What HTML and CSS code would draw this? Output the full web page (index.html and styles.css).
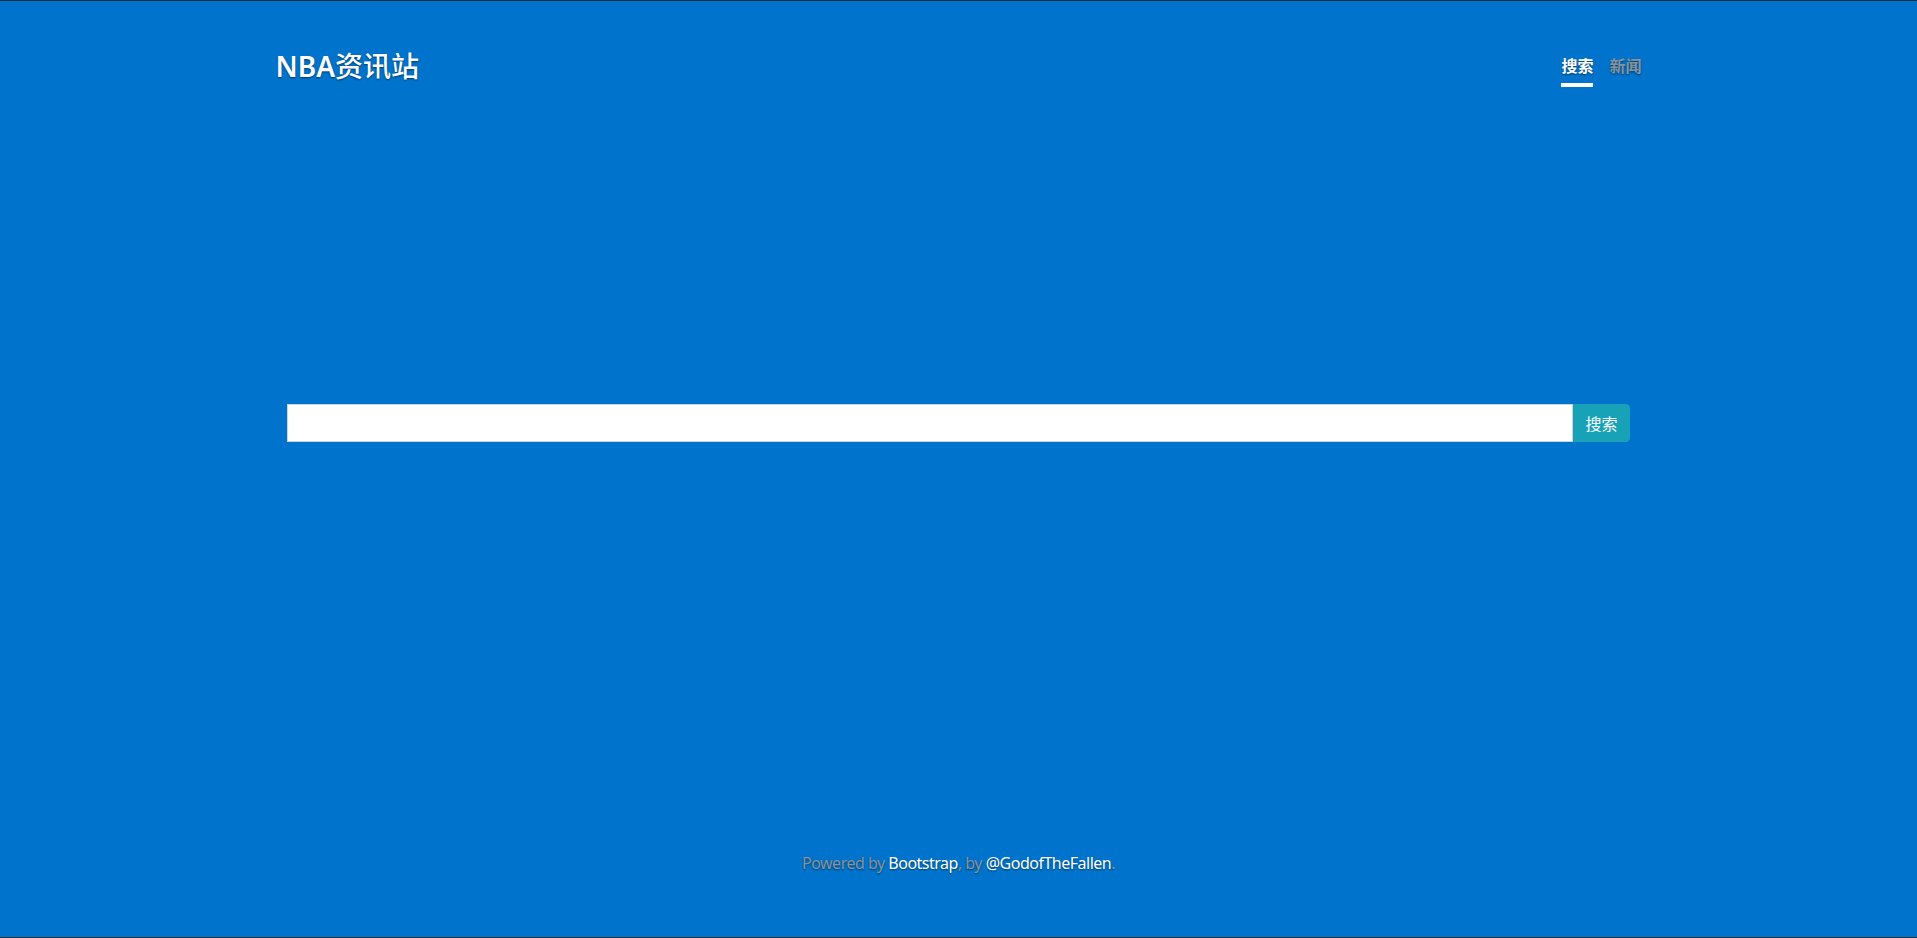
FILE: index.html
```html
<!DOCTYPE html>
<html lang="zh-CN">
<head>
<meta charset="utf-8">
<title>NBA资讯站</title>
<link rel="stylesheet" href="styles.css">
</head>
<body>
<div class="cover">
  <header class="masthead">
    <h3 class="brand">NBA<span class="brand-cjk">资讯站</span></h3>
    <nav class="nav">
      <a class="nav-link active" href="#">搜索</a>
      <a class="nav-link" href="#">新闻</a>
    </nav>
  </header>
  <main class="main">
    <form class="search">
      <input class="search-input" type="text">
      <button class="search-btn" type="button">搜索</button>
    </form>
  </main>
  <footer class="footer">
    <p>Powered by <a href="#">Bootstrap</a>, by <a href="#">@GodofTheFallen</a>.</p>
  </footer>
</div>
</body>
</html>
```
FILE: styles.css
```css
* { box-sizing: border-box; }
html, body { height: 100%; }
body {
  margin: 0;
  background: #0074cc;
  color: #fff;
  font-family: "Noto Sans", "Noto Sans CJK SC", sans-serif;
  font-size: 16px;
  line-height: 1.5;
  text-shadow: 0 1px 2px rgba(0,0,0,.5);
  border-top: 1px solid #1d2a36;
  border-bottom: 1px solid #1d2a36;
}
.cover {
  height: 100%;
  display: flex;
  flex-direction: column;
  width: 1366px;
  margin: 0 auto;
}
.masthead {
  display: flex;
  justify-content: space-between;
  align-items: flex-start;
  padding-top: 49px;
}
.brand {
  margin: 0;
  font-size: 28px;
  font-weight: 600;
  line-height: 1.2;
}
.brand-cjk { font-weight: 500; }
.nav { display: flex; gap: 16px; margin-top: -1px; }
.nav-link {
  font-family: "Noto Sans CJK SC", sans-serif;
  font-weight: 700;
  font-size: 16px;
  color: #8594a1;
  text-decoration: none;
  padding: 4px 0 6px;
  line-height: 24px;
  border-bottom: 4px solid transparent;
}
.nav-link.active { color: #fff; border-bottom-color: #fff; }
.main {
  flex: 1;
  display: flex;
  flex-direction: column;
  align-items: center;
  padding-top: 317px;
}
.search {
  display: flex;
  width: 1343px;
  height: 38px;
  margin: 0;
}
.search-input {
  flex: 1;
  height: 38px;
  border: 1px solid #ced4da;
  background: #fff;
  border-radius: 0;
  padding: 6px 12px;
  font-size: 16px;
}
.search-btn {
  width: 57px;
  height: 38px;
  border: 1px solid #17a2b8;
  background: #17a2b8;
  color: #fff;
  border-radius: 0 4px 4px 0;
  font-family: "Noto Sans CJK SC", sans-serif;
  font-size: 16px;
  padding: 0;
  text-shadow: none;
}
.footer {
  text-align: center;
  color: #8594a1;
  padding-bottom: 62px;
  letter-spacing: -0.5px;
}
.footer p { margin: 0; }
.footer a { color: #fff; text-decoration: none; }
```
